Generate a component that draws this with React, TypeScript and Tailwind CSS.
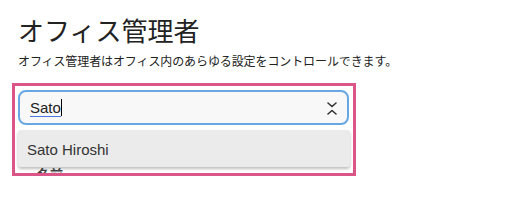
import React from "react";

export default function App() {
  return (
    <div
      className="w-[512px] h-[201px] bg-white overflow-hidden text-[#222]"
      style={{ fontFamily: '"Liberation Sans", "Noto Sans CJK JP", sans-serif' }}
    >
      <div className="pl-[18px] pt-[11px]">
        <h1 className="text-[26px] leading-[38px] font-normal text-[#222]" style={{ fontFamily: '"Noto Sans CJK JP", sans-serif' }}>
          オフィス管理者
        </h1>
        <p className="text-[12px] leading-[18px] mt-[3px] text-[#222] tracking-[-0.1px]" style={{ fontFamily: '"Noto Sans CJK JP", sans-serif' }}>
          オフィス管理者はオフィス内のあらゆる設定をコントロールできます。
        </p>
      </div>
      <div className="ml-[12px] mt-[13px] w-[344px] h-[93px] border-[3px] border-[#dc5588] overflow-hidden relative px-[3px] pt-[4px]">
        <div className="h-[35px] w-[331px] rounded-[8px] border-2 border-[#68a7e4] bg-[#f8f8f8] flex items-center pl-[10px] pr-[9px] pt-[1px]">
          <span className="relative text-[15px] leading-[20px] text-[#222]">
            <span className="border-b border-[#4a78e0]">Sato</span>
            <span className="inline-block w-px h-[17px] bg-black align-[-3px]" />
          </span>
          <div className="ml-auto flex items-center">
            <svg width="12" height="15" viewBox="0 0 12 15" fill="none" stroke="#333" strokeWidth="1.6" strokeLinecap="round" strokeLinejoin="round">
              <path d="M2 2 L6 5.5 L10 2" />
              <path d="M2 13 L6 9.5 L10 13" />
            </svg>
          </div>
        </div>
        <div className="mt-[40px] pl-[19px] text-[13px] leading-[18px] font-bold text-[#444]" style={{ fontFamily: '"Noto Sans CJK JP", sans-serif' }}>
          名前
        </div>
        <div className="absolute left-[3px] top-[44px] w-[332px] h-[37px] bg-[#ebebeb] rounded-[3px] shadow-[0_2px_3px_rgba(0,0,0,0.25)] flex items-center pl-[9px] pt-[3px]">
          <span className="text-[15px] text-[#333]">Sato Hiroshi</span>
        </div>
      </div>
    </div>
  );
}
